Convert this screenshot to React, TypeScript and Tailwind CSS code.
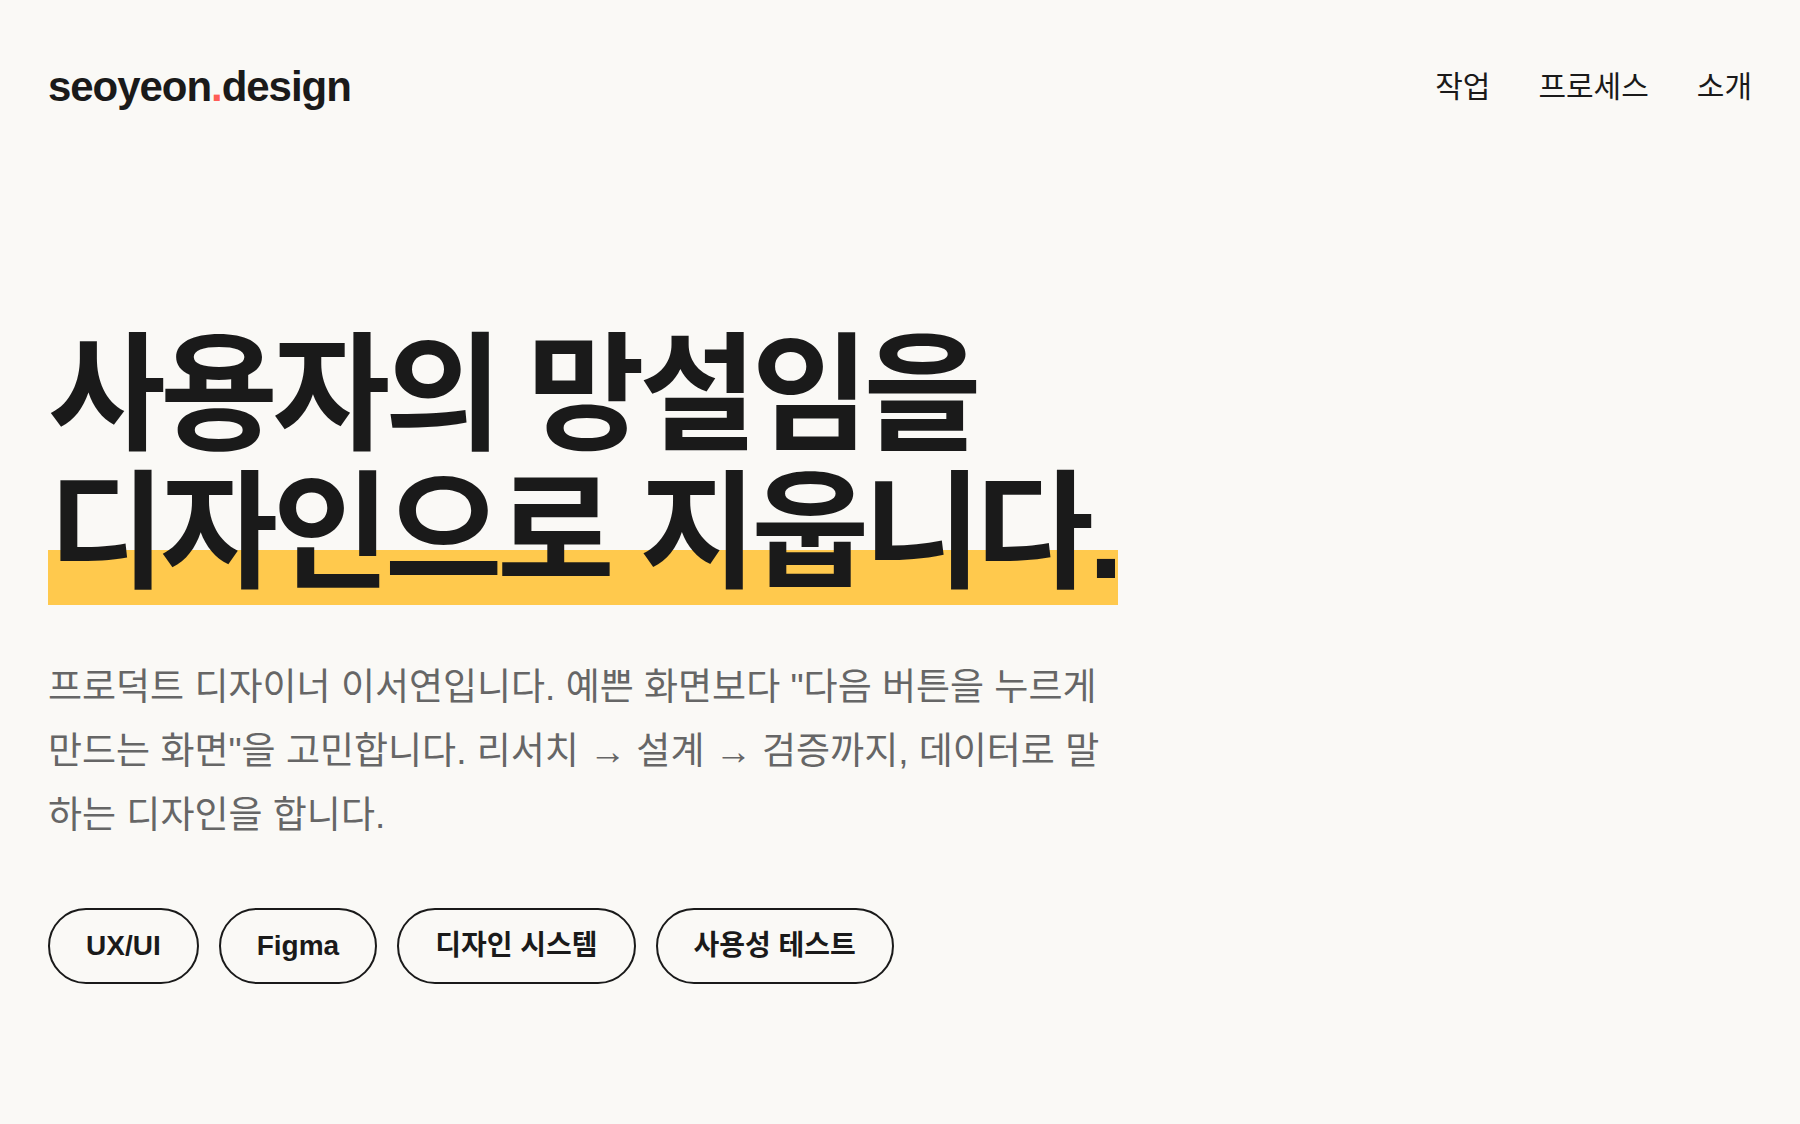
export default function App() {
  const tags = ['UX/UI', 'Figma', '디자인 시스템', '사용성 테스트'];

  return (
    <div className="min-h-screen bg-[#faf9f6] text-[#1a1a1a] font-['Liberation_Sans','Noto_Sans_CJK_KR',sans-serif]">
      {/* header */}
      <header className="flex items-center justify-between px-12 pt-[66px]">
        <a href="#" className="text-[42px] font-bold leading-none tracking-[-0.025em]">
          seoyeon<span className="text-[#ff5e57]">.</span>design
        </a>
        <nav className="flex gap-12 text-[30px] leading-[42px]">
          <a href="#">작업</a>
          <a href="#">프로세스</a>
          <a href="#">소개</a>
        </nav>
      </header>

      {/* hero */}
      <main className="px-12 pt-[219px] pb-24">
        <h1 className="text-[128px] font-bold leading-[1.08] tracking-[-0.043em]">
          사용자의 망설임을
          <br />
          <span className="bg-[linear-gradient(transparent_61.5%,#ffc94d_61.5%)]">디자인으로 지웁니다.</span>
        </h1>
        <p className="mt-[53px] max-w-[1072px] text-[37px] leading-[64px] text-[#666666]">
          프로덕트 디자이너 이서연입니다. 예쁜 화면보다 "다음 버튼을 누르게 만드는 화면"을 고민합니다. 리서치 → 설계 → 검증까지, 데이터로 말하는 디자인을 합니다.
        </p>
        <div className="mt-[60px] flex gap-5">
          {tags.map((tag) => (
            <span
              key={tag}
              className="rounded-full border-2 border-[#1a1a1a] px-9 py-4 text-[28px] font-bold leading-[40px]"
            >
              {tag}
            </span>
          ))}
        </div>
      </main>
    </div>
  );
}
